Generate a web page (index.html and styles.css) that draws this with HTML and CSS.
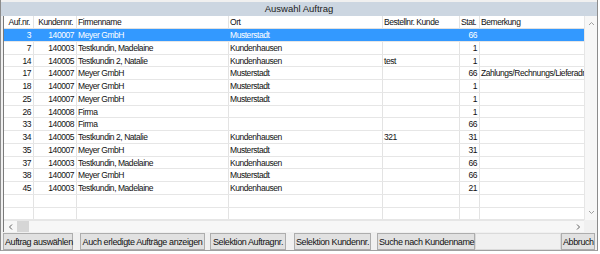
FILE: index.html
```html
<!DOCTYPE html>
<html lang="de">
<head>
    <meta charset="UTF-8">
    <title>Auswahl Auftrag</title>
    <link rel="stylesheet" href="styles.css">
</head>
<body>
    <div class="window">
        <div class="title">Auswahl Auftrag</div>

        <div class="grid">
            <div class="list">
                <div class="row head">
                    <div class="c1 num">Auf.nr.</div>
                    <div class="c2 num">Kundennr.</div>
                    <div class="c3">Firmenname</div>
                    <div class="c4">Ort</div>
                    <div class="c5">Bestellnr. Kunde</div>
                    <div class="c6 num">Stat.</div>
                    <div class="c7">Bemerkung</div>
                </div>
                <div class="row selected">
                    <div class="c1 num">3</div><div class="c2 num">140007</div><div class="c3">Meyer GmbH</div><div class="c4">Musterstadt</div><div class="c5"></div><div class="c6 num">66</div><div class="c7"></div>
                </div>
                <div class="row">
                    <div class="c1 num">7</div><div class="c2 num">140003</div><div class="c3">Testkundin, Madelaine</div><div class="c4">Kundenhausen</div><div class="c5"></div><div class="c6 num">1</div><div class="c7"></div>
                </div>
                <div class="row">
                    <div class="c1 num">14</div><div class="c2 num">140005</div><div class="c3">Testkundin 2, Natalie</div><div class="c4">Kundenhausen</div><div class="c5">test</div><div class="c6 num">1</div><div class="c7"></div>
                </div>
                <div class="row">
                    <div class="c1 num">17</div><div class="c2 num">140007</div><div class="c3">Meyer GmbH</div><div class="c4">Musterstadt</div><div class="c5"></div><div class="c6 num">66</div><div class="c7">Zahlungs/Rechnungs/Lieferadresse</div>
                </div>
                <div class="row">
                    <div class="c1 num">18</div><div class="c2 num">140007</div><div class="c3">Meyer GmbH</div><div class="c4">Musterstadt</div><div class="c5"></div><div class="c6 num">1</div><div class="c7"></div>
                </div>
                <div class="row">
                    <div class="c1 num">25</div><div class="c2 num">140007</div><div class="c3">Meyer GmbH</div><div class="c4">Musterstadt</div><div class="c5"></div><div class="c6 num">1</div><div class="c7"></div>
                </div>
                <div class="row">
                    <div class="c1 num">26</div><div class="c2 num">140008</div><div class="c3">Firma</div><div class="c4"></div><div class="c5"></div><div class="c6 num">1</div><div class="c7"></div>
                </div>
                <div class="row">
                    <div class="c1 num">33</div><div class="c2 num">140008</div><div class="c3">Firma</div><div class="c4"></div><div class="c5"></div><div class="c6 num">66</div><div class="c7"></div>
                </div>
                <div class="row">
                    <div class="c1 num">34</div><div class="c2 num">140005</div><div class="c3">Testkundin 2, Natalie</div><div class="c4">Kundenhausen</div><div class="c5">321</div><div class="c6 num">31</div><div class="c7"></div>
                </div>
                <div class="row">
                    <div class="c1 num">35</div><div class="c2 num">140007</div><div class="c3">Meyer GmbH</div><div class="c4">Musterstadt</div><div class="c5"></div><div class="c6 num">31</div><div class="c7"></div>
                </div>
                <div class="row">
                    <div class="c1 num">37</div><div class="c2 num">140003</div><div class="c3">Testkundin, Madelaine</div><div class="c4">Kundenhausen</div><div class="c5"></div><div class="c6 num">66</div><div class="c7"></div>
                </div>
                <div class="row">
                    <div class="c1 num">38</div><div class="c2 num">140007</div><div class="c3">Meyer GmbH</div><div class="c4">Musterstadt</div><div class="c5"></div><div class="c6 num">66</div><div class="c7"></div>
                </div>
                <div class="row">
                    <div class="c1 num">45</div><div class="c2 num">140003</div><div class="c3">Testkundin, Madelaine</div><div class="c4">Kundenhausen</div><div class="c5"></div><div class="c6 num">21</div><div class="c7"></div>
                </div>
                <div class="row">
                    <div class="c1"></div><div class="c2"></div><div class="c3"></div><div class="c4"></div><div class="c5"></div><div class="c6"></div><div class="c7"></div>
                </div>
                <div class="row">
                    <div class="c1"></div><div class="c2"></div><div class="c3"></div><div class="c4"></div><div class="c5"></div><div class="c6"></div><div class="c7"></div>
                </div>
            </div>

            <div class="vscroll">
                <svg width="13" height="13" viewBox="0 0 13 13"><polyline points="4,8 6.5,5.5 9,8" fill="none" stroke="#a0a0a0" stroke-width="1"/></svg>
                <svg width="13" height="13" viewBox="0 0 13 13"><polyline points="4,5 6.5,7.5 9,5" fill="none" stroke="#a0a0a0" stroke-width="1"/></svg>
            </div>

            <div class="hscroll">
                <svg width="12" height="12" viewBox="0 0 12 12"><polyline points="7,3.5 4.5,6 7,8.5" fill="none" stroke="#606060" stroke-width="1"/></svg>
                <div class="thumb"></div>
                <svg class="right" width="12" height="12" viewBox="0 0 12 12"><polyline points="5,3.5 7.5,6 5,8.5" fill="none" stroke="#606060" stroke-width="1"/></svg>
            </div>

            <div class="corner"></div>
        </div>

        <div class="buttons">
            <button class="b-select">Auftrag auswählen</button>
            <button class="b-done">Auch erledigte Aufträge anzeigen</button>
            <button class="b-order">Selektion Auftragnr.</button>
            <button class="b-cust">Selektion Kundennr.</button>
            <button class="b-search">Suche nach Kundenname</button>
            <div class="blank"></div>
            <button class="b-cancel">Abbruch</button>
        </div>
    </div>
</body>
</html>
```

FILE: styles.css
```css
* {
    box-sizing: border-box;
}

body {
    margin: 0;
    background: #ffffff;
    font-family: "Liberation Sans", Arial, sans-serif;
    font-size: 8.5px;
    letter-spacing: -0.45px;
    color: #111111;
}

.window {
    width: 598px;
    height: 251px;
    padding-top: 2px;
    background: #f0f0f0;
    border-left: 1px solid #8c8c8c;
    border-right: 1px solid #8c8c8c;
    border-bottom: 1px solid #a0a0a0;
}

.title {
    height: 14px;
    line-height: 14px;
    text-align: center;
    background: #ccd6e1;
    font-size: 9.5px;
    letter-spacing: 0;
    color: #222222;
}

.grid {
    display: grid;
    grid-template-columns: 1fr 13px;
    grid-template-rows: 204px 12px;
    margin-left: 2px;
    width: 594px;
    background: #ffffff;
    border-left: 1px solid #7a7a7a;
}

.list {
    overflow: hidden;
}

.row {
    display: flex;
    height: 12.75px;
    line-height: 12px;
    border-bottom: 1px solid #e6e6e6;
    white-space: nowrap;
}

.row.head {
    height: 13px;
    border-bottom: 1px solid #e0e0e0;
}

.row > div {
    overflow: hidden;
    padding: 0 1px;
    border-right: 1px solid #e3e3e3;
}

.row .num {
    text-align: right;
    padding-right: 2px;
}

.row.head .num {
    padding-right: 3px;
}

.c1 { width: 30px; }
.c2 { width: 43px; }
.c3 { width: 152px; }
.c4 { width: 154px; }
.c5 { width: 77px; }
.c6 { width: 20px; }
.c7 { flex: 1; }

.row .c7 {
    border-right: none;
}

.row.selected {
    background: #3399ff;
    color: #ffffff;
}

.row.selected > div {
    border-right-color: #3399ff;
}

.vscroll {
    display: flex;
    flex-direction: column;
    justify-content: space-between;
    padding: 1px 0 1px;
    background: #f7f7f7;
    border-left: 1px solid #e6e6e6;
}

.hscroll {
    display: flex;
    align-items: center;
    background: #f7f7f7;
    border-top: 1px solid #e6e6e6;
}

.hscroll svg {
    margin-left: 1px;
}

.hscroll .right {
    margin-left: auto;
}

.thumb {
    width: 12px;
    height: 11px;
    background: #d6d6d6;
}

.corner {
    background: #f0f0f0;
}

.buttons {
    display: flex;
    height: 17px;
    margin: 1px 0 0 2px;
}

button {
    height: 17px;
    padding: 0 1px;
    font-family: "Liberation Sans", Arial, sans-serif;
    font-size: 9px;
    letter-spacing: -0.4px;
    color: #111111;
    background: #e1e1e1;
    border: 1px solid #adadad;
    white-space: nowrap;
}

.b-select { width: 70px; }
.b-done { width: 125px; margin-left: 7px; }
.b-order { width: 76px; margin-left: 5px; }
.b-cust { width: 77px; margin-left: 8px; }
.b-search { width: 98px; margin-left: 6px; }
.b-cancel { width: 34px; }

.blank {
    width: 86px;
    height: 17px;
    background: #f0f0f0;
    border: 1px solid #dadada;
}
```
